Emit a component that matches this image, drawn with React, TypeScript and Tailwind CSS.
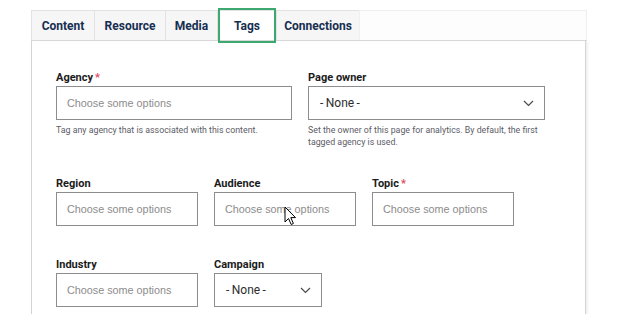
import React from "react";

const tabs = [
  { label: "Content", w: "w-[63px]" },
  { label: "Resource", w: "w-[71px]" },
  { label: "Media", w: "w-[52px]" },
  { label: "Tags", w: "w-[59px]", active: true },
  { label: "Connections", w: "w-[83px]" },
];

function Label({ text, required }: { text: string; required?: boolean }) {
  return (
    <div className="flex h-[14px] items-center text-[11px] font-bold leading-none text-[#1b1b1b]">
      {text}
      {required && <span className="ml-[2px] text-[#e0485f]">*</span>}
    </div>
  );
}

function MultiInput({ w }: { w: string }) {
  return (
    <div
      className={`${w} mt-[2px] flex h-[34px] items-center border border-[#8d8d8d] bg-white pl-[10px] font-['Liberation_Sans',Arial,sans-serif] text-[10.8px] text-[#8c8c8c]`}
    >
      Choose some options
    </div>
  );
}

function Chevron() {
  return (
    <svg width="11" height="7" viewBox="0 0 11 7" className="shrink-0">
      <polyline points="1,1 5.5,5.5 10,1" fill="none" stroke="#4a4a4a" strokeWidth="1.2" />
    </svg>
  );
}

function Select({ w }: { w: string }) {
  return (
    <div
      className={`${w} mt-[2px] flex h-[34px] items-center justify-between border border-[#8d8d8d] bg-white pl-[11px] pr-[10px] text-[12px] text-[#2d2d2d]`}
    >
      <span>-&#8201;None&#8201;-</span>
      <Chevron />
    </div>
  );
}

function Help({ children }: { children: React.ReactNode }) {
  return (
    <p className="mt-[4px] whitespace-nowrap text-[8.8px] leading-[12px] text-[#5c5c66]">{children}</p>
  );
}

export default function App() {
  return (
    <div className="relative h-[314px] w-[644px] overflow-hidden bg-white font-['Roboto','Liberation_Sans',sans-serif]">
      <div className="ml-[31px] mt-[10px] flex w-[556px] flex-col">
        <div className="flex h-[31px] border-b border-[#dcdcdc]">
          {tabs.map((t) => (
            <div
              key={t.label}
              className={`${t.w} relative flex items-center justify-center border-l border-t border-[#e2e2e2] text-[12px] font-bold text-[#162e51] ${
                t.active ? "bg-white" : "bg-[#f6f6f6]"
              }`}
            >
              {t.label}
              {t.active && (
                <span className="absolute -top-[3px] -bottom-[3px] left-0 right-0 border-2 border-[#3da86f]" />
              )}
            </div>
          ))}
          <div className="flex-1 border-l border-r border-t border-[#efefef] bg-[#fdfdfd]" />
        </div>

        <div className="h-[300px] w-[555px] border-l border-r border-[#d4d4d4] bg-white px-[24px] pt-[29px] shadow-[2px_0_2px_rgba(0,0,0,0.06)]">
          <div className="flex gap-[16px]">
            <div className="w-[236px]">
              <Label text="Agency" required />
              <MultiInput w="w-[236px]" />
              <Help>Tag any agency that is associated with this content.</Help>
            </div>
            <div className="w-[237px]">
              <Label text="Page owner" />
              <Select w="w-[237px]" />
              <Help>
                Set the owner of this page for analytics. By default, the first
                <br />
                tagged agency is used.
              </Help>
            </div>
          </div>

          <div className="mt-[28px] flex gap-[16px]">
            <div>
              <Label text="Region" />
              <MultiInput w="w-[142px]" />
            </div>
            <div className="relative">
              <Label text="Audience" />
              <MultiInput w="w-[142px]" />
              <svg
                width="13"
                height="20"
                viewBox="0 0 13 20"
                className="absolute left-[70px] top-[30px]"
              >
                <path
                  d="M1 1 L1 16 L4.5 12.5 L7.2 18.5 L9.4 17.5 L6.8 11.6 L11.5 11.6 Z"
                  fill="white"
                  stroke="black"
                  strokeWidth="1"
                  strokeLinejoin="round"
                />
              </svg>
            </div>
            <div>
              <Label text="Topic" required />
              <MultiInput w="w-[142px]" />
            </div>
          </div>

          <div className="mt-[31px] flex gap-[16px]">
            <div>
              <Label text="Industry" />
              <MultiInput w="w-[142px]" />
            </div>
            <div>
              <Label text="Campaign" />
              <Select w="w-[108px]" />
            </div>
          </div>
        </div>
      </div>
    </div>
  );
}
